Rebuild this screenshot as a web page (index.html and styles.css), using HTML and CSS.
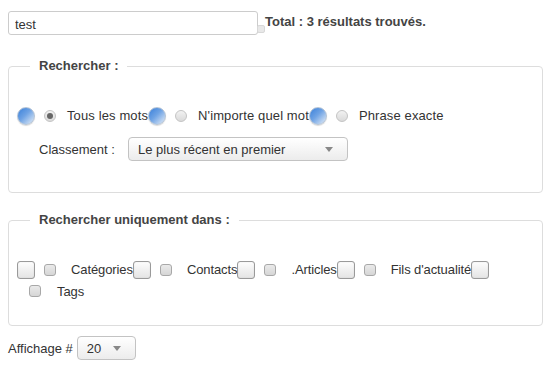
FILE: index.html
```html
<!DOCTYPE html>
<html>

<head>
    <meta charset="UTF-8" />
    <title>Recherche</title>
    <link rel="stylesheet" href="styles.css">
</head>

<body>
    <div class="page">
        <div class="searchbar">
            <input type="text" class="searchword" value="test">
            <span class="grip"></span>
            <span class="total">Total : 3 résultats trouvés.</span>
        </div>

        <fieldset class="group">
            <legend>Rechercher :</legend>
            <div class="row">
                <span class="opt"><span class="orb"></span><span class="radio checked"></span><span class="lbl">Tous les mots</span></span>
                <span class="opt"><span class="orb"></span><span class="radio"></span><span class="lbl">N'importe quel mot</span></span>
                <span class="opt"><span class="orb"></span><span class="radio"></span><span class="lbl">Phrase exacte</span></span>
            </div>
            <div class="row order">
                <span class="field-label">Classement :</span>
                <div class="select wide">Le plus récent en premier<span class="arrow"></span></div>
            </div>
        </fieldset>

        <fieldset class="group areas">
            <legend>Rechercher uniquement dans :</legend>
            <div class="row">
                <span class="opt"><span class="box"></span><span class="check"></span><span class="lbl">Catégories</span></span>
                <span class="opt"><span class="box"></span><span class="check"></span><span class="lbl">Contacts</span></span>
                <span class="opt"><span class="box"></span><span class="check"></span><span class="lbl">.Articles</span></span>
                <span class="opt"><span class="box"></span><span class="check"></span><span class="lbl">Fils d'actualité</span></span>
                <span class="box"></span>
            </div>
            <div class="row second">
                <span class="opt"><span class="check"></span><span class="lbl">Tags</span></span>
            </div>
        </fieldset>

        <div class="limit">
            <span>Affichage #</span>
            <div class="select small">20<span class="arrow"></span></div>
        </div>
    </div>
</body>

</html>
```

FILE: styles.css
```css
body {
    margin: 0;
    font-family: "Liberation Sans", Arial, sans-serif;
    font-size: 13px;
    color: #333;
    background: #fff;
}

.page {
    padding: 0 8px;
    width: 535px;
}

.searchbar {
    display: flex;
    align-items: flex-start;
    padding-top: 11px;
}

.searchword {
    box-sizing: border-box;
    width: 250px;
    height: 24px;
    margin: 0;
    padding: 3px 6px 0;
    border: 1px solid #ccc;
    border-radius: 3px;
    font-family: inherit;
    font-size: 13px;
    color: #333;
}

.grip {
    display: inline-block;
    width: 6px;
    height: 6px;
    margin: 14px 0 0 -1px;
    border: 1px solid #d8d8d8;
    border-radius: 2px;
    background: #e8e8e8;
}

.total {
    font-weight: bold;
    color: #444;
    margin-top: 3px;
    line-height: 15px;
}

.group {
    margin: 23px 0 0;
    padding: 32px 8px 31px;
    border: 1px solid #ddd;
    border-radius: 4px;
}

.group legend {
    margin-left: 13px;
    padding: 0 9px;
    font-weight: bold;
    color: #444;
    line-height: 16px;
}

.row {
    display: flex;
    align-items: center;
    height: 19px;
}

.opt {
    display: flex;
    align-items: center;
}

.orb {
    width: 16px;
    height: 16px;
    border-radius: 50%;
    border: 1px solid #b5c4d6;
    background: linear-gradient(135deg, #3a80da 0%, #6fa3e4 45%, #e6eef8 100%);
    box-shadow: 0 1px 1px rgba(0, 0, 0, 0.15);
}

.radio {
    position: relative;
    width: 10px;
    height: 10px;
    margin-left: 9px;
    border-radius: 50%;
    border: 1px solid #c4c4c4;
    background: linear-gradient(#f2f2f2, #dadada);
}

.radio.checked::after {
    content: "";
    position: absolute;
    left: 2px;
    top: 2px;
    width: 6px;
    height: 6px;
    border-radius: 50%;
    background: #666;
}

.lbl {
    margin-left: 11px;
    letter-spacing: 0.12px;
}

.order {
    height: 24px;
    margin-top: 12px;
    padding-left: 22px;
}

.field-label {
    width: 89px;
}

.select {
    position: relative;
    box-sizing: border-box;
    height: 24px;
    padding: 4px 9px 0;
    border: 1px solid #c3c3c3;
    border-radius: 4px;
    background: linear-gradient(#fff, #ececec);
    color: #333;
    line-height: 16px;
}

.select.wide {
    width: 220px;
}

.select.small {
    width: 59px;
}

.arrow {
    position: absolute;
    right: 14px;
    top: 9px;
    border-left: 4px solid transparent;
    border-right: 4px solid transparent;
    border-top: 5px solid #888;
}

.areas {
    margin-top: 19px;
    padding-bottom: 26px;
}

.box {
    box-sizing: border-box;
    width: 18px;
    height: 18px;
    border: 1px solid #9a9a9a;
    border-radius: 3px;
    background: linear-gradient(#fdfdfd, #e4e4e4);
    box-shadow: inset 0 0 1px rgba(0, 0, 0, 0.2);
}

.check {
    box-sizing: border-box;
    width: 12px;
    height: 12px;
    margin-left: 9px;
    border: 1px solid #a8a8a8;
    border-radius: 3px;
    background: linear-gradient(#eaeaea, #d6d6d6);
}

.areas .lbl {
    margin-left: 15px;
    letter-spacing: -0.1px;
}

.areas .row {
    height: 19px;
}

.areas .row.second {
    height: 16px;
    margin-top: 4px;
    padding-left: 3px;
}

.areas .second .lbl {
    margin-left: 16px;
}

.limit {
    display: flex;
    align-items: center;
    margin-top: 10px;
}

.limit .select {
    margin-left: 4px;
}
```
